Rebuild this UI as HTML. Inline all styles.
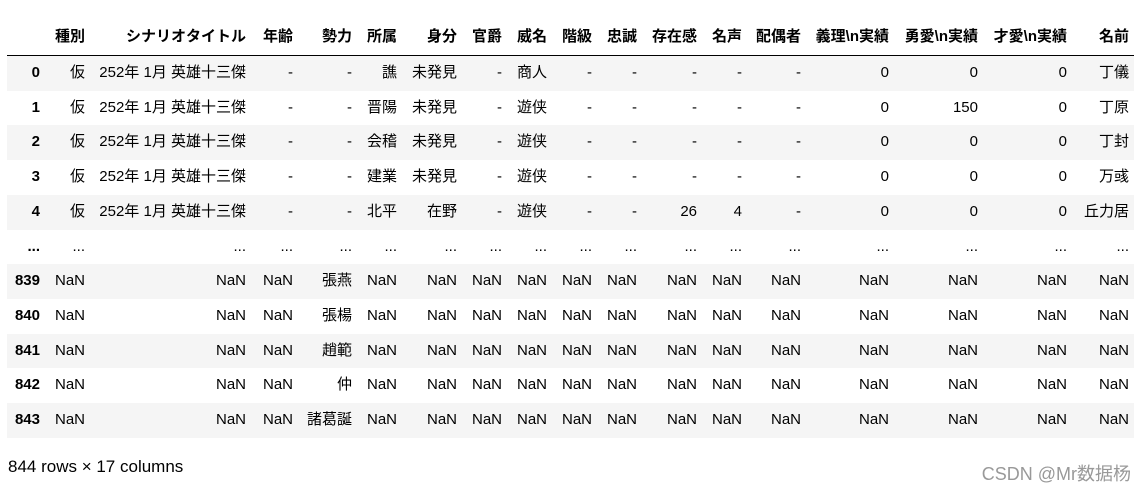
<!DOCTYPE html>
<html><head><meta charset="utf-8"><style>
body{margin:0;background:#fff;font-family:"Liberation Sans","Noto Sans CJK JP",sans-serif;font-size:15px;color:#000;width:1144px;height:490px;overflow:hidden;position:relative}
table{position:absolute;left:7px;top:22px;border-collapse:collapse;table-layout:fixed;width:1127px}
td,th{padding:0 5px;text-align:right;white-space:nowrap;overflow:hidden;height:34.7px;line-height:34.7px}
thead th{height:33px;line-height:30px;border-bottom:1px solid #000;font-weight:bold;vertical-align:top}
tbody tr:nth-child(odd){background:#f5f5f5}
tbody th{font-weight:bold}
.foot{position:absolute;left:8px;top:457px;font-size:17px}
.wm{position:absolute;right:13px;top:460px;font-size:18px;color:#999}
</style></head><body>
<table>
<colgroup><col style="width:38px"><col style="width:45px"><col style="width:161px"><col style="width:47px"><col style="width:59px"><col style="width:45px"><col style="width:60px"><col style="width:45px"><col style="width:45px"><col style="width:45px"><col style="width:45px"><col style="width:60px"><col style="width:45px"><col style="width:59px"><col style="width:88px"><col style="width:89px"><col style="width:89px"><col style="width:62px"></colgroup>
<thead><tr><th></th><th>種別</th><th>シナリオタイトル</th><th>年齢</th><th>勢力</th><th>所属</th><th>身分</th><th>官爵</th><th>威名</th><th>階級</th><th>忠誠</th><th>存在感</th><th>名声</th><th>配偶者</th><th>義理\n実績</th><th>勇愛\n実績</th><th>才愛\n実績</th><th>名前</th></tr></thead>
<tbody>
<tr><th>0</th><td>仮</td><td>252年 1月 英雄十三傑</td><td>-</td><td>-</td><td>譙</td><td>未発見</td><td>-</td><td>商人</td><td>-</td><td>-</td><td>-</td><td>-</td><td>-</td><td>0</td><td>0</td><td>0</td><td>丁儀</td></tr>
<tr><th>1</th><td>仮</td><td>252年 1月 英雄十三傑</td><td>-</td><td>-</td><td>晋陽</td><td>未発見</td><td>-</td><td>遊侠</td><td>-</td><td>-</td><td>-</td><td>-</td><td>-</td><td>0</td><td>150</td><td>0</td><td>丁原</td></tr>
<tr><th>2</th><td>仮</td><td>252年 1月 英雄十三傑</td><td>-</td><td>-</td><td>会稽</td><td>未発見</td><td>-</td><td>遊侠</td><td>-</td><td>-</td><td>-</td><td>-</td><td>-</td><td>0</td><td>0</td><td>0</td><td>丁封</td></tr>
<tr><th>3</th><td>仮</td><td>252年 1月 英雄十三傑</td><td>-</td><td>-</td><td>建業</td><td>未発見</td><td>-</td><td>遊侠</td><td>-</td><td>-</td><td>-</td><td>-</td><td>-</td><td>0</td><td>0</td><td>0</td><td>万彧</td></tr>
<tr><th>4</th><td>仮</td><td>252年 1月 英雄十三傑</td><td>-</td><td>-</td><td>北平</td><td>在野</td><td>-</td><td>遊侠</td><td>-</td><td>-</td><td>26</td><td>4</td><td>-</td><td>0</td><td>0</td><td>0</td><td>丘力居</td></tr>
<tr><th>...</th><td>...</td><td>...</td><td>...</td><td>...</td><td>...</td><td>...</td><td>...</td><td>...</td><td>...</td><td>...</td><td>...</td><td>...</td><td>...</td><td>...</td><td>...</td><td>...</td><td>...</td></tr>
<tr><th>839</th><td>NaN</td><td>NaN</td><td>NaN</td><td>張燕</td><td>NaN</td><td>NaN</td><td>NaN</td><td>NaN</td><td>NaN</td><td>NaN</td><td>NaN</td><td>NaN</td><td>NaN</td><td>NaN</td><td>NaN</td><td>NaN</td><td>NaN</td></tr>
<tr><th>840</th><td>NaN</td><td>NaN</td><td>NaN</td><td>張楊</td><td>NaN</td><td>NaN</td><td>NaN</td><td>NaN</td><td>NaN</td><td>NaN</td><td>NaN</td><td>NaN</td><td>NaN</td><td>NaN</td><td>NaN</td><td>NaN</td><td>NaN</td></tr>
<tr><th>841</th><td>NaN</td><td>NaN</td><td>NaN</td><td>趙範</td><td>NaN</td><td>NaN</td><td>NaN</td><td>NaN</td><td>NaN</td><td>NaN</td><td>NaN</td><td>NaN</td><td>NaN</td><td>NaN</td><td>NaN</td><td>NaN</td><td>NaN</td></tr>
<tr><th>842</th><td>NaN</td><td>NaN</td><td>NaN</td><td>仲</td><td>NaN</td><td>NaN</td><td>NaN</td><td>NaN</td><td>NaN</td><td>NaN</td><td>NaN</td><td>NaN</td><td>NaN</td><td>NaN</td><td>NaN</td><td>NaN</td><td>NaN</td></tr>
<tr><th>843</th><td>NaN</td><td>NaN</td><td>NaN</td><td>諸葛誕</td><td>NaN</td><td>NaN</td><td>NaN</td><td>NaN</td><td>NaN</td><td>NaN</td><td>NaN</td><td>NaN</td><td>NaN</td><td>NaN</td><td>NaN</td><td>NaN</td><td>NaN</td></tr>
</tbody></table>
<div class="foot">844 rows × 17 columns</div>
<div class="wm">CSDN @Mr数据杨</div>
</body></html>
